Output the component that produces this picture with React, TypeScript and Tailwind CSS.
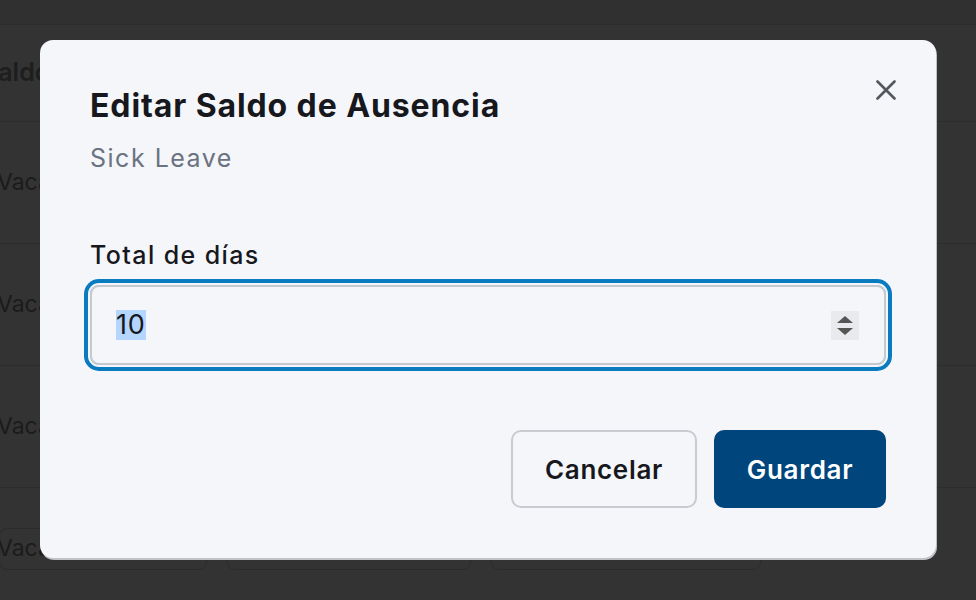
import React from "react";

function Row({ label, last }: { label: string; last?: boolean }) {
  return (
    <div className="h-[122px] border-b border-[#2c2c2c] flex items-center relative">
      <span className="text-[23px] text-[#1b1b1b] -ml-[3px]">{label}</span>
      {last && (
        <div className="absolute left-0 top-[40px] flex gap-[20px]">
          <div className="w-[208px] h-[42px] -ml-[1px] rounded-[8px] border border-[#2b2b2b]" />
          <div className="w-[244px] h-[42px] rounded-[8px] border border-[#2b2b2b]" />
          <div className="w-[270px] h-[42px] rounded-[8px] border border-[#2b2b2b]" />
        </div>
      )}
    </div>
  );
}

export default function App() {
  return (
    <div
      className="relative w-[976px] h-[600px] overflow-hidden bg-[#333333]"
      style={{ fontFamily: "Inter, 'Noto Sans', sans-serif" }}
    >
      {/* background page under overlay */}
      <div className="flex flex-col">
        <div className="h-[25px] bg-[#303030] border-b border-[#2c2c2c]" />
        <div className="h-[97px] border-b border-[#2c2c2c] flex items-center">
          <span className="text-[25px] font-semibold text-[#1e1e1e] -ml-[18px]">Saldo</span>
        </div>
        <Row label="Vacaciones" />
        <Row label="Vacaciones" />
        <Row label="Vacaciones" />
        <Row label="Vacaciones" last />
      </div>

      {/* dialog */}
      <div className="absolute left-[40px] top-[40px] w-[896px] h-[518px] rounded-[13px] bg-[#f4f6fa] shadow-[1px_2px_0_#bfc1c4] pt-[48px] px-[50px] pb-[49px] flex flex-col">
        <button className="absolute top-[40px] right-[40px] w-[20px] h-[20px] flex items-center justify-center">
          <svg width="20" height="20" viewBox="0 0 20 20" fill="none">
            <path d="M1.5 1.5 L18.5 18.5 M18.5 1.5 L1.5 18.5" stroke="#54585e" strokeWidth="2.6" strokeLinecap="round" />
          </svg>
        </button>
        <h2 className="text-[32px] leading-[36px] font-bold text-[#16181d] tracking-[0.9px] whitespace-nowrap">
          Editar Saldo de Ausencia
        </h2>
        <p className="mt-[16px] text-[25px] leading-[36px] text-[#6b7280] tracking-[1.5px]">Sick Leave</p>

        <label className="mt-[61px] text-[25px] leading-[36px] font-medium text-[#16181d] tracking-[1.4px]">
          Total de días
        </label>
        <div className="mt-[12px] h-[80px] rounded-[9px] border-2 border-[#c5c9cf] shadow-[0_0_0_2px_#f4f6fa,0_0_0_6px_#0b7bbf] flex items-center pl-[24px] pr-[25px]">
          <span className="text-[27px] leading-[30px] text-[#16181d] bg-[#b4d5fe] tracking-[0.8px]">10</span>
          <div className="ml-auto w-[28px] h-[29px] bg-[#e8eaed] flex flex-col items-center justify-center gap-[5px]">
            <svg width="16" height="7" viewBox="0 0 16 7">
              <path d="M8 0 L16 7 L0 7 Z" fill="#555555" />
            </svg>
            <svg width="16" height="7" viewBox="0 0 16 7">
              <path d="M0 0 L16 0 L8 7 Z" fill="#555555" />
            </svg>
          </div>
        </div>

        <div className="mt-[65px] flex justify-end gap-[17px]">
          <button className="w-[186px] h-[78px] rounded-[10px] border-2 border-[#c8ccd1] bg-[#f4f6fa] text-[26px] font-semibold text-[#16181d] tracking-[0.7px]">
            Cancelar
          </button>
          <button className="w-[172px] h-[78px] rounded-[10px] bg-[#00457c] text-[26px] font-semibold text-white tracking-[0.7px]">
            Guardar
          </button>
        </div>
      </div>
    </div>
  );
}
